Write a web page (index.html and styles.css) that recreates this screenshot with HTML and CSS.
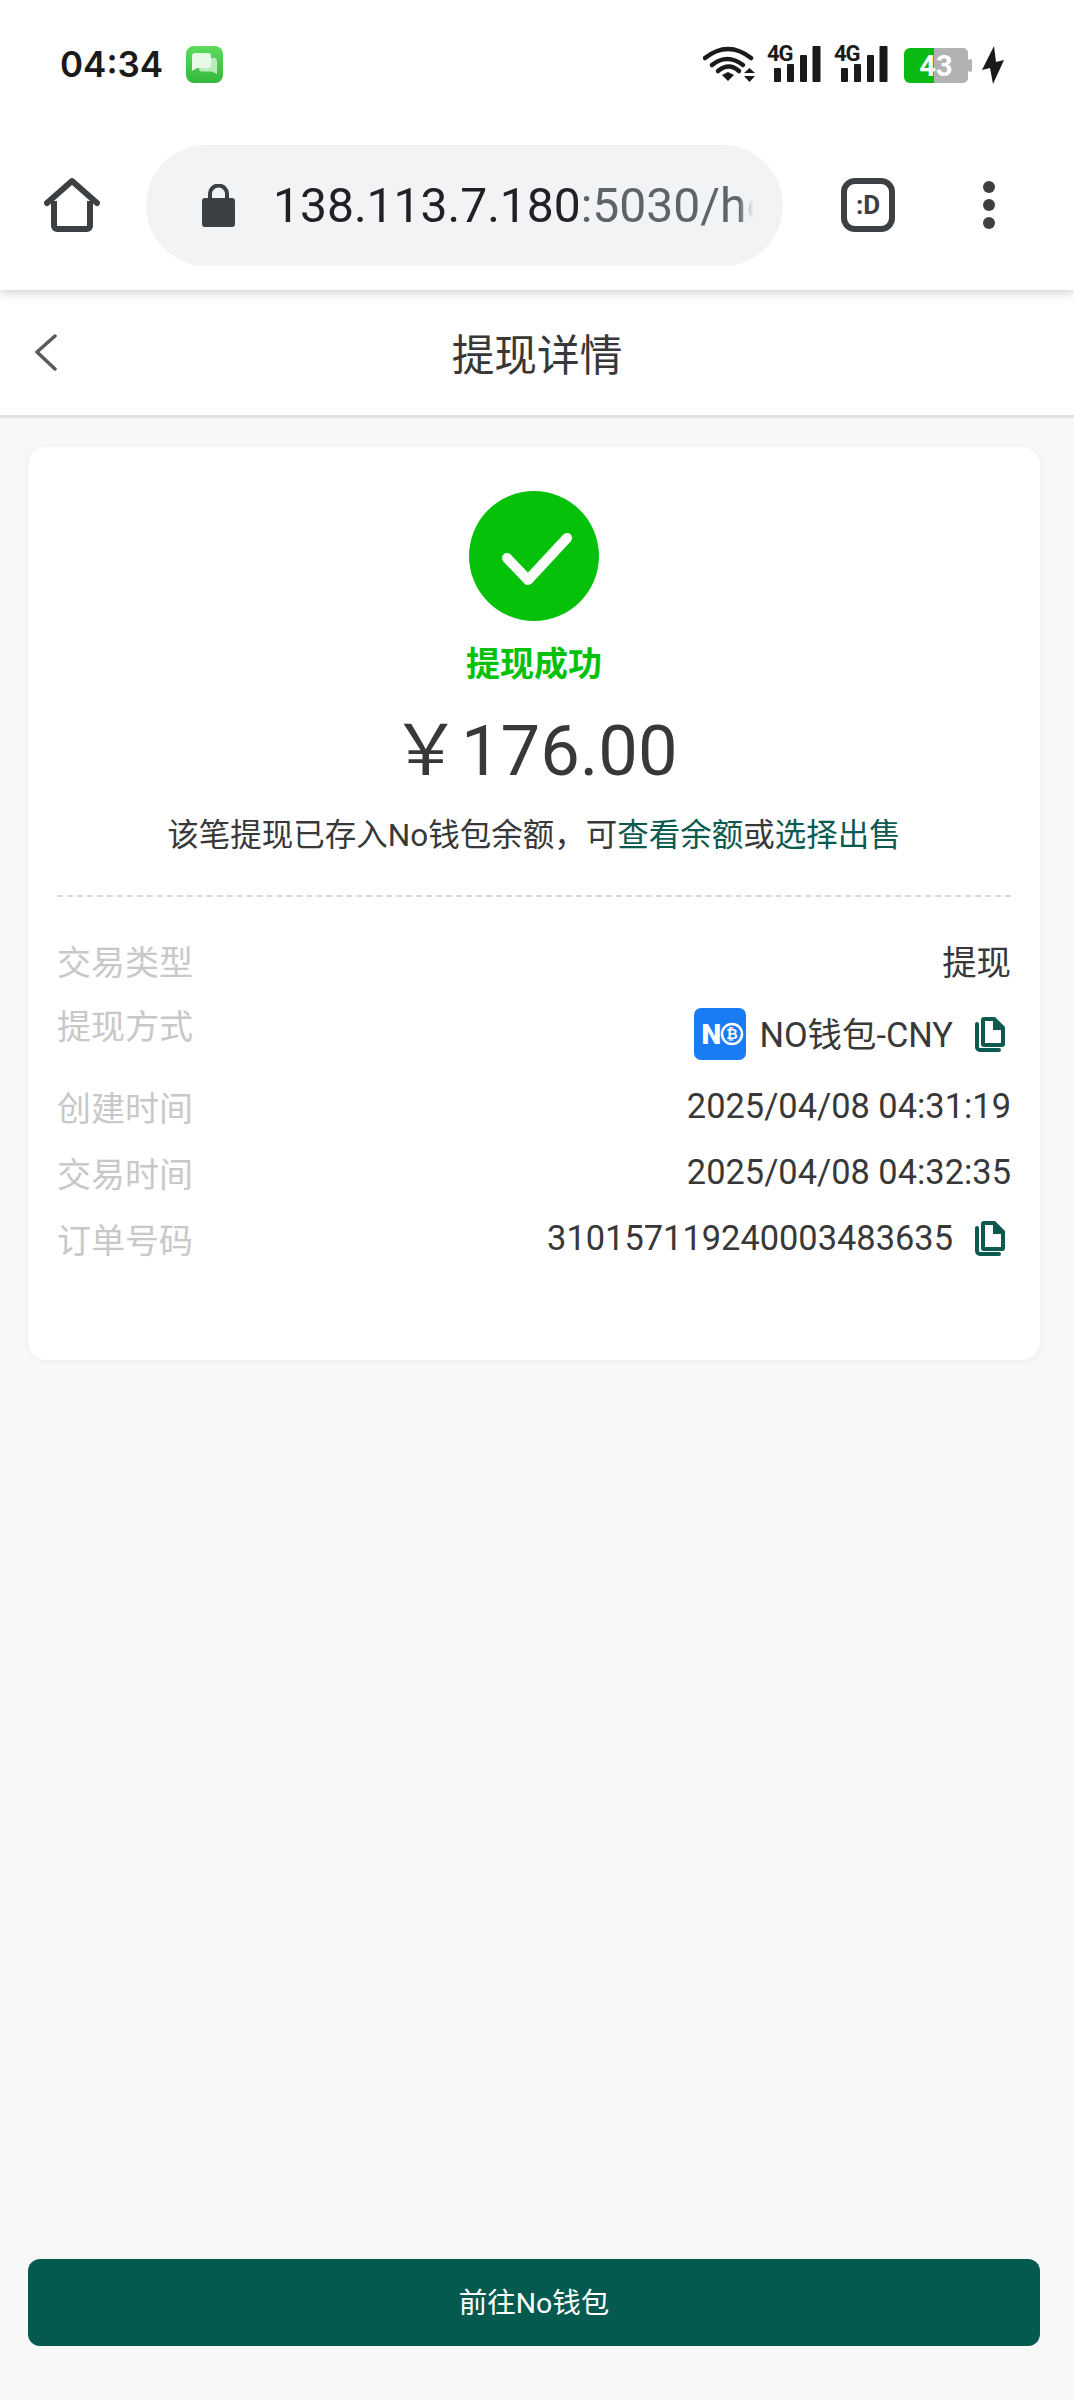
FILE: index.html
```html
<!DOCTYPE html>
<html lang="zh-CN">
<head>
<meta charset="utf-8">
<title>提现详情</title>
<link rel="stylesheet" href="styles.css">
</head>
<body>
<div class="phone">
  <div class="status">
    <span class="clock">04:34</span>
    <svg class="msg" viewBox="0 0 37 37">
      <defs><linearGradient id="mg" x1="0" y1="0" x2="0" y2="1"><stop offset="0" stop-color="#5cdc5c"/><stop offset="1" stop-color="#34b93c"/></linearGradient></defs>
      <rect width="37" height="37" rx="8" fill="url(#mg)"/>
      <path d="M16 12h12a3 3 0 0 1 3 3v13l-5-2.500H16a3 3 0 0 1-3-3V15a3 3 0 0 1 3-3z" fill="#b9ecb9"/>
      <path d="M9 7h13a3 3 0 0 1 3 3v9a3 3 0 0 1-3 3H11l-5 3V10a3 3 0 0 1 3-3z" fill="#e6f8e6"/>
    </svg>
    <span class="grow"></span>
    <svg class="wifi" viewBox="0 0 52 37">
      <path d="M2 12Q25-6 48 12" fill="none" stroke="#1a1a1a" stroke-width="4.500" stroke-linecap="round"/>
      <path d="M9 19Q24 7 40 19" fill="none" stroke="#1a1a1a" stroke-width="4.500" stroke-linecap="round"/>
      <path d="M15 25Q26 16 36 25" fill="none" stroke="#1a1a1a" stroke-width="4.500" stroke-linecap="round"/>
      <path d="M19 29 25 26l6 3-6 6z" fill="#1a1a1a"/>
      <path d="M41 27l5.500-5 5.500 5zM41 30h11l-5.500 6z" fill="#1a1a1a"/>
    </svg>
    <svg class="sig" viewBox="0 0 54 37">
      <text x="0" y="16" class="sig-label">4G</text>
      <rect x="7" y="23" width="7" height="14" rx="1" fill="#1a1a1a"/>
      <rect x="20" y="19" width="7" height="18" rx="1" fill="#1a1a1a"/>
      <rect x="33" y="10" width="7" height="27" rx="1" fill="#1a1a1a"/>
      <rect x="45.500" y="1" width="8" height="36" rx="1" fill="#1a1a1a"/>
    </svg>
    <svg class="sig sig-b" viewBox="0 0 54 37">
      <text x="0" y="16" class="sig-label">4G</text>
      <rect x="7" y="23" width="7" height="14" rx="1" fill="#1a1a1a"/>
      <rect x="20" y="19" width="7" height="18" rx="1" fill="#1a1a1a"/>
      <rect x="33" y="10" width="7" height="27" rx="1" fill="#1a1a1a"/>
      <rect x="45.500" y="1" width="8" height="36" rx="1" fill="#1a1a1a"/>
    </svg>
    <svg class="batt" viewBox="0 0 68 35">
      <path d="M6 0h24v35H6a6 6 0 0 1-6-6V6a6 6 0 0 1 6-6z" fill="#08ba12"/>
      <path d="M30 0h29a5 5 0 0 1 5 5v25a5 5 0 0 1-5 5H30z" fill="#b2b2b2"/>
      <rect x="64" y="11" width="4" height="13" rx="2" fill="#b2b2b2"/>
      <text x="32" y="28" class="batt-num">43</text>
    </svg>
    <svg class="bolt" viewBox="0 0 22 38"><path d="M12 0 0 24l8-2 3 16L22 14l-8 2z" fill="#1a1a1a"/></svg>
  </div>

  <div class="toolbar">
    <svg class="home" viewBox="0 0 56 56">
      <path d="M10 24v25a3 3 0 0 0 3 3h30a3 3 0 0 0 3-3V24" fill="none" stroke="#3c4043" stroke-width="6"/>
      <path d="M3 26 28 4l25 22" fill="none" stroke="#3c4043" stroke-width="6" stroke-linecap="round" stroke-linejoin="round"/>
    </svg>
    <div class="omnibox">
      <svg class="lock" viewBox="0 0 33 43">
        <path d="M8 18V10a8.500 8.500 0 0 1 17 0v8" fill="none" stroke="#3c4043" stroke-width="4"/>
        <rect x="0" y="14" width="33" height="29" rx="3" fill="#3c4043"/>
      </svg>
      <div class="url"><span class="host">138.113.7.180</span><span class="path">:5030/home</span></div>
    </div>
    <div class="tabs"><span>:D</span></div>
    <div class="menu"><i></i><i></i><i></i></div>
  </div>

  <header class="nav">
    <svg class="back" viewBox="0 0 24 38"><path d="M22 3 4 19l18 17" fill="none" stroke="#5a5a5a" stroke-width="3.500" stroke-linecap="round" stroke-linejoin="round"/></svg>
    <h1>提现详情</h1>
  </header>

  <main class="content">
    <section class="card">
      <div class="tick">
        <svg viewBox="0 0 130 130"><path d="M38 67 59 89 98 47" fill="none" stroke="#fff" stroke-width="10" stroke-linecap="round" stroke-linejoin="round"/></svg>
      </div>
      <div class="state">提现成功</div>
      <div class="amount"><span class="yen">&#xFFE5;</span>176.00</div>
      <p class="note">该笔提现已存入No钱包余额，可<a>查看余额</a>或<a>选择出售</a></p>
      <div class="rule"></div>
      <dl class="rows">
        <div class="row"><dt>交易类型</dt><dd>提现</dd></div>
        <div class="row row-pay"><dt>提现方式</dt><dd>
          <span class="logo"><b>N</b><svg viewBox="0 0 24 24"><circle cx="12" cy="12" r="10" fill="none" stroke="#fff" stroke-width="2.500"/><text x="12" y="17" class="btc">₿</text></svg></span>
          <span class="pay-name">NO钱包-CNY</span>
          <svg class="copy" viewBox="0 0 31 35"><path d="M3 7v23a3 3 0 0 0 3 3h19" fill="none" stroke="#0b5a50" stroke-width="4" stroke-linecap="round"/><path d="M10 0h11l10 10v17a3 3 0 0 1-3 3H10a3 3 0 0 1-3-3V3a3 3 0 0 1 3-3z" fill="#0b5a50"/><path d="M11 4h8v9h8v13H11z" fill="#fff"/></svg>
        </dd></div>
        <div class="row"><dt>创建时间</dt><dd>2025/04/08 04:31:19</dd></div>
        <div class="row"><dt>交易时间</dt><dd>2025/04/08 04:32:35</dd></div>
        <div class="row"><dt>订单号码</dt><dd>310157119240003483635
          <svg class="copy" viewBox="0 0 31 35"><path d="M3 7v23a3 3 0 0 0 3 3h19" fill="none" stroke="#0b5a50" stroke-width="4" stroke-linecap="round"/><path d="M10 0h11l10 10v17a3 3 0 0 1-3 3H10a3 3 0 0 1-3-3V3a3 3 0 0 1 3-3z" fill="#0b5a50"/><path d="M11 4h8v9h8v13H11z" fill="#fff"/></svg>
        </dd></div>
      </dl>
    </section>
    <button class="go">前往No钱包</button>
  </main>
</div>
</body>
</html>
```
FILE: styles.css
```css
* { box-sizing: border-box; }
html, body { margin: 0; padding: 0; }
body {
  width: 1074px;
  height: 2400px;
  overflow: hidden;
  background: #f8f8f8;
  font-family: Roboto, "Noto Sans CJK SC", sans-serif;
  color: #383838;
}
.phone { display: flex; flex-direction: column; height: 2400px; }

/* system status bar */
.status {
  height: 95px;
  padding: 0 70px 0 60px;
  display: flex;
  align-items: flex-start;
  background: #fff;
  position: relative;
  z-index: 3;
}
.clock {
  margin-top: 42px;
  font-size: 35px;
  line-height: 44px;
  font-weight: 600;
  color: #1a1a1a;
  font-family: Inter, Roboto, sans-serif;
  width: 126px;
}
.msg { width: 37px; height: 37px; margin-top: 46px; }
.grow { flex: 1; }
.wifi { width: 52px; height: 37px; margin-top: 46px; }
.sig { width: 54px; height: 37px; margin: 45px 0 0 12px; overflow: visible; }
.sig-b { margin-left: 13px; }
.sig-label { font: 700 22px "Liberation Sans Narrow", Roboto, sans-serif; fill: #1a1a1a; letter-spacing: -1px; }
.batt { width: 68px; height: 35px; margin: 48px 0 0 16px; }
.batt-num { font: 700 29px Roboto, sans-serif; fill: #fff; text-anchor: middle; }
.bolt { width: 22px; height: 38px; margin: 46px 0 0 10px; }

/* browser toolbar */
.toolbar {
  height: 195px;
  display: flex;
  align-items: flex-start;
  background: #fff;
  position: relative;
  box-shadow: 0 3px 10px rgba(0, 0, 0, .18);
  z-index: 2;
}
.home { width: 56px; height: 56px; margin: 82px 0 0 44px; flex: none; }
.omnibox {
  width: 637px;
  height: 121px;
  margin: 50px 0 0 46px;
  border-radius: 61px;
  background: #f1f3f4;
  display: flex;
  align-items: center;
  padding-left: 56px;
  flex: none;
}
.lock { width: 33px; height: 43px; flex: none; }
.url {
  margin-left: 38px;
  width: 480px;
  font-size: 48px;
  line-height: 121px;
  white-space: nowrap;
  overflow: hidden;
  -webkit-mask-image: linear-gradient(to right, #000 97%, transparent);
  mask-image: linear-gradient(to right, #000 97%, transparent);
}
.host { color: #202124; }
.path { color: #5f6368; }
.tabs {
  width: 54px;
  height: 54px;
  margin: 83px 0 0 58px;
  border: 6px solid #3c4043;
  border-radius: 14px;
  display: flex;
  align-items: center;
  justify-content: center;
  font: 700 26px "Liberation Sans Narrow", Roboto, sans-serif;
  color: #3c4043;
  flex: none;
}
.menu {
  margin: 86px 0 0 88px;
  display: flex;
  flex-direction: column;
  gap: 6px;
}
.menu i { display: block; width: 12px; height: 12px; border-radius: 50%; background: #3c4043; }

/* page header */
.nav {
  height: 128px;
  padding-bottom: 2px;
  background: #fff;
  border-bottom: 3px solid #e2e2e2;
  display: flex;
  align-items: center;
  justify-content: center;
  position: relative;
}
.nav h1 { margin: 0; font-size: 42.700px; font-weight: 400; color: #383838; }
.back { position: absolute; left: 33px; top: 43px; width: 24px; height: 38px; }

.content { flex: 1; padding: 29px 34px 54px 28px; display: flex; flex-direction: column; justify-content: space-between; }

/* result card */
.card {
  height: 913px;
  background: #fff;
  border-radius: 18px;
  box-shadow: 0 1px 6px rgba(0, 0, 0, .06);
  padding: 44px 30px 0;
  display: flex;
  flex-direction: column;
  align-items: center;
}
.tick { width: 130px; height: 130px; border-radius: 50%; background: #06c10a; flex: none; }
.tick svg { display: block; width: 130px; height: 130px; }
.state { margin-top: 21px; font-size: 34px; line-height: 44px; font-weight: 700; color: #06c10a; }
.amount { margin-top: 13px; font-size: 70.500px; line-height: 90px; color: #383838; white-space: nowrap; }
.yen { font-family: "Noto Sans CJK SC", sans-serif; }
.note { margin: 16px 0 0; font-size: 31.500px; line-height: 48px; color: #383838; white-space: nowrap; }
.note a { color: #0b5a50; }
.rule { width: 954px; margin-top: 35px; border-top: 2px dashed #d8d8d8; flex: none; }
.rows { margin: 30px 0 0; width: 954px; }
.row { display: flex; justify-content: space-between; height: 66px; align-items: center; }
.row-pay { height: 80px; align-items: flex-start; }
.row-pay dt { margin-top: 1px; line-height: 66px; }
.row-pay dd { margin-top: 15px; }
.pay-name { position: relative; top: -2px; }
dt { font-size: 34px; color: #c8c8c8; }
dd { margin: 0; font-size: 34.400px; color: #383838; display: flex; align-items: center; white-space: nowrap; }
.logo {
  width: 52px;
  height: 52px;
  border-radius: 7px;
  background: #1a7cf5;
  margin-right: 13px;
  display: flex;
  align-items: center;
  padding-left: 7px;
}
.logo b { font: 900 28px Roboto, sans-serif; color: #fff; margin-right: -1px; }
.logo svg { width: 24px; height: 24px; flex: none; }
.btc { font: 700 14px Roboto, "DejaVu Sans", sans-serif; fill: #fff; text-anchor: middle; }
.copy { width: 31px; height: 35px; margin: 0 6px 0 21px; flex: none; }

/* primary action */
.go {
  height: 87px;
  border: 0;
  border-radius: 12px;
  background: #055a50;
  color: #fff;
  font-family: inherit;
  font-size: 28.500px;
  padding: 0 0 5px;
}
```
